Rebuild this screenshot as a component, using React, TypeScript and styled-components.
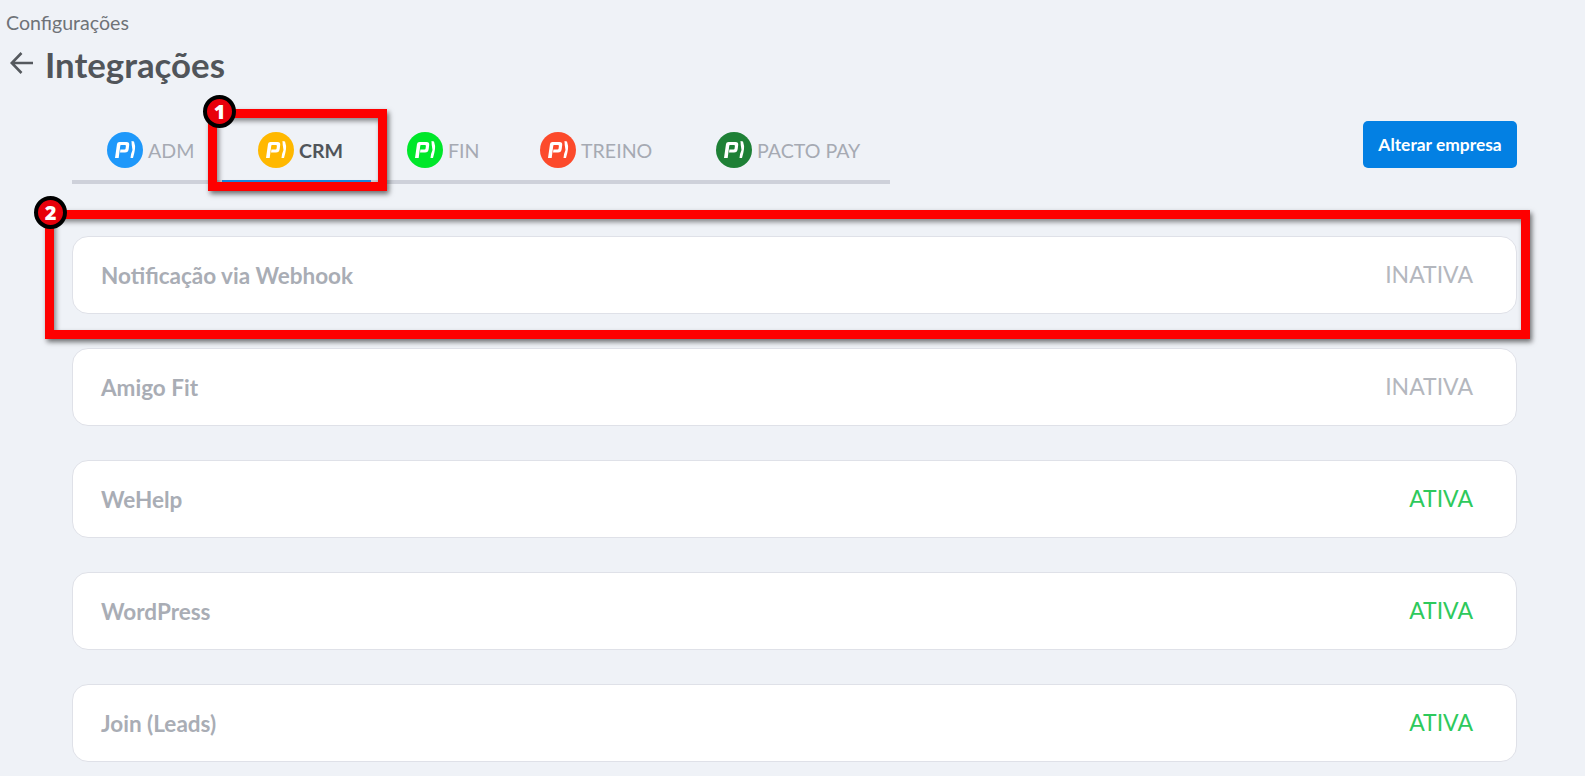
import React from 'react'
import styled, { createGlobalStyle } from 'styled-components'

const GlobalStyle = createGlobalStyle`
  html, body {
    margin: 0;
    padding: 0;
    height: 776px;
    overflow: hidden;
    background: #eff2f7;
    font-family: 'Lato', 'Noto Sans', sans-serif;
  }
`

const Page = styled.div`
  position: relative;
  height: 776px;
  overflow: hidden;
  padding-top: 11px;
  box-sizing: border-box;
`

const Crumb = styled.div`
  margin-left: 6px;
  color: #6f7378;
  font-size: 19.6px;
  line-height: 24px;
`

const TitleRow = styled.div`
  display: flex;
  align-items: center;
  gap: 11px;
  margin: 8px 0 0 9px;
  height: 44px;
`

const BackIcon = styled.svg`
  margin-top: -4px;
`

const Title = styled.h1`
  margin: 0 0 0 -1px;
  color: #51555a;
  font-size: 34.8px;
  font-weight: 700;
  line-height: 44px;
`

const TabsRow = styled.div`
  display: flex;
  justify-content: space-between;
  align-items: flex-start;
  margin: 33px 68px 0 72px;
`

const Tabs = styled.div`
  display: flex;
  height: 60px;
  border-bottom: 4px solid #ced1da;
`

const Tab = styled.div<{ $width: number; $active?: boolean }>`
  position: relative;
  display: flex;
  align-items: center;
  gap: 5px;
  box-sizing: border-box;
  width: ${({ $width }) => $width}px;
  padding: 0 0 0 ${({ $active }) => ($active ? 36 : 35)}px;
  color: ${({ $active }) => ($active ? '#51555a' : '#a6aab3')};
  font-size: 19.6px;
  font-weight: ${({ $active }) => ($active ? 700 : 400)};

  ${({ $active }) =>
    $active &&
    `&::after {
      content: '';
      position: absolute;
      left: 0;
      right: 1px;
      bottom: -2px;
      height: 2px;
      background: #1b88e0;
    }`}
`

const Button = styled.button`
  width: 154px;
  height: 47px;
  margin-top: 1px;
  border: 0;
  border-radius: 5px;
  background: #0380e3;
  color: #fff;
  font-family: inherit;
  font-size: 17.4px;
  font-weight: 700;
`

const List = styled.div`
  display: flex;
  flex-direction: column;
  gap: 34px;
  margin: 52px 68px 0 72px;
`

const Card = styled.div`
  display: flex;
  justify-content: space-between;
  align-items: center;
  box-sizing: border-box;
  height: 78px;
  padding: 0 43px 0 28px;
  background: #fff;
  border: 1px solid #dfe1e8;
  border-radius: 16px;
`

const CardName = styled.span`
  color: #a9adb5;
  font-size: 22.5px;
  font-weight: 700;
`

const CardStatus = styled.span<{ $active: boolean }>`
  margin-top: -3px;
  color: ${({ $active }) => ($active ? '#2ec95c' : '#b4b7be')};
  font-size: 23px;
`

const Highlight = styled.div<{ $left: number; $top: number; $width: number; $height: number }>`
  position: absolute;
  left: ${({ $left }) => $left}px;
  top: ${({ $top }) => $top}px;
  width: ${({ $width }) => $width}px;
  height: ${({ $height }) => $height}px;
  box-sizing: border-box;
  border: 9px solid #fe0000;
  box-shadow: 2px 3px 5px rgba(0, 0, 0, 0.55), inset 2px 3px 5px rgba(0, 0, 0, 0.45);
`

const Marker = styled.div<{ $left: number; $top: number }>`
  position: absolute;
  left: ${({ $left }) => $left}px;
  top: ${({ $top }) => $top}px;
  display: flex;
  align-items: center;
  justify-content: center;
  box-sizing: border-box;
  width: 33px;
  height: 33px;
  border: 4px solid #000;
  border-radius: 50%;
  background: #e8000b;
  color: #fff;
  font-family: 'Open Sans', sans-serif;
  font-size: 20px;
  font-weight: 800;
`

const ArrowLeft = () => (
  <BackIcon width="26" height="26" viewBox="0 0 26 26" fill="none" stroke="#55595e" strokeWidth="2.6">
    <path d="M24 13H3M12.5 3 2.8 13l9.7 10" />
  </BackIcon>
)

const PactoLogo = ({ color, size = 36 }: { color: string; size?: number }) => (
  <svg width={size} height={size} viewBox="0 0 36 36">
    <circle cx="18" cy="18" r="18" fill={color} />
    <path
      d="M8 26 10 12Q10.3 10 12.5 10H19.5Q22.6 10 22.2 13L21.7 17Q21.3 20.5 18 20.5H13L13.4 17.5H17.5Q18.5 17.5 18.6 16.5L18.9 14Q19 13 18 13H14Q13.4 13 13.3 13.6L11.7 26Z"
      fill="#fff"
    />
    <path d="M24.5 9 27 9.5Q28.5 14 28 17 27.5 21 26 26L23.5 26Q24 21 25.5 18 24.5 13 24.5 9Z" fill="#fff" />
  </svg>
)

const tabs = [
  { label: 'ADM', color: '#1e98fa', width: 150 },
  { label: 'CRM', color: '#ffb800', width: 150, active: true },
  { label: 'FIN', color: '#00e72a', width: 133 },
  { label: 'TREINO', color: '#fc4a2b', width: 176 },
  { label: 'PACTO PAY', color: '#1e8036', width: 209 },
]

const integrations = [
  { name: 'Notificação via Webhook', active: false },
  { name: 'Amigo Fit', active: false },
  { name: 'WeHelp', active: true },
  { name: 'WordPress', active: true },
  { name: 'Join (Leads)', active: true },
]

export default function App() {
  return (
    <Page>
      <GlobalStyle />
      <Crumb>Configurações</Crumb>
      <TitleRow>
        <ArrowLeft />
        <Title>Integrações</Title>
      </TitleRow>

      <TabsRow>
        <Tabs>
          {tabs.map((tab) => (
            <Tab key={tab.label} $width={tab.width} $active={tab.active}>
              <PactoLogo color={tab.color} />
              {tab.label}
            </Tab>
          ))}
        </Tabs>
        <Button>Alterar empresa</Button>
      </TabsRow>

      <List>
        {integrations.map((item) => (
          <Card key={item.name}>
            <CardName>{item.name}</CardName>
            <CardStatus $active={item.active}>{item.active ? 'ATIVA' : 'INATIVA'}</CardStatus>
          </Card>
        ))}
      </List>

      <Highlight $left={208} $top={109} $width={179} $height={82} />
      <Highlight $left={45} $top={210} $width={1485} $height={129} />
      <Marker $left={203} $top={95}>1</Marker>
      <Marker $left={34} $top={196}>2</Marker>
    </Page>
  )
}
